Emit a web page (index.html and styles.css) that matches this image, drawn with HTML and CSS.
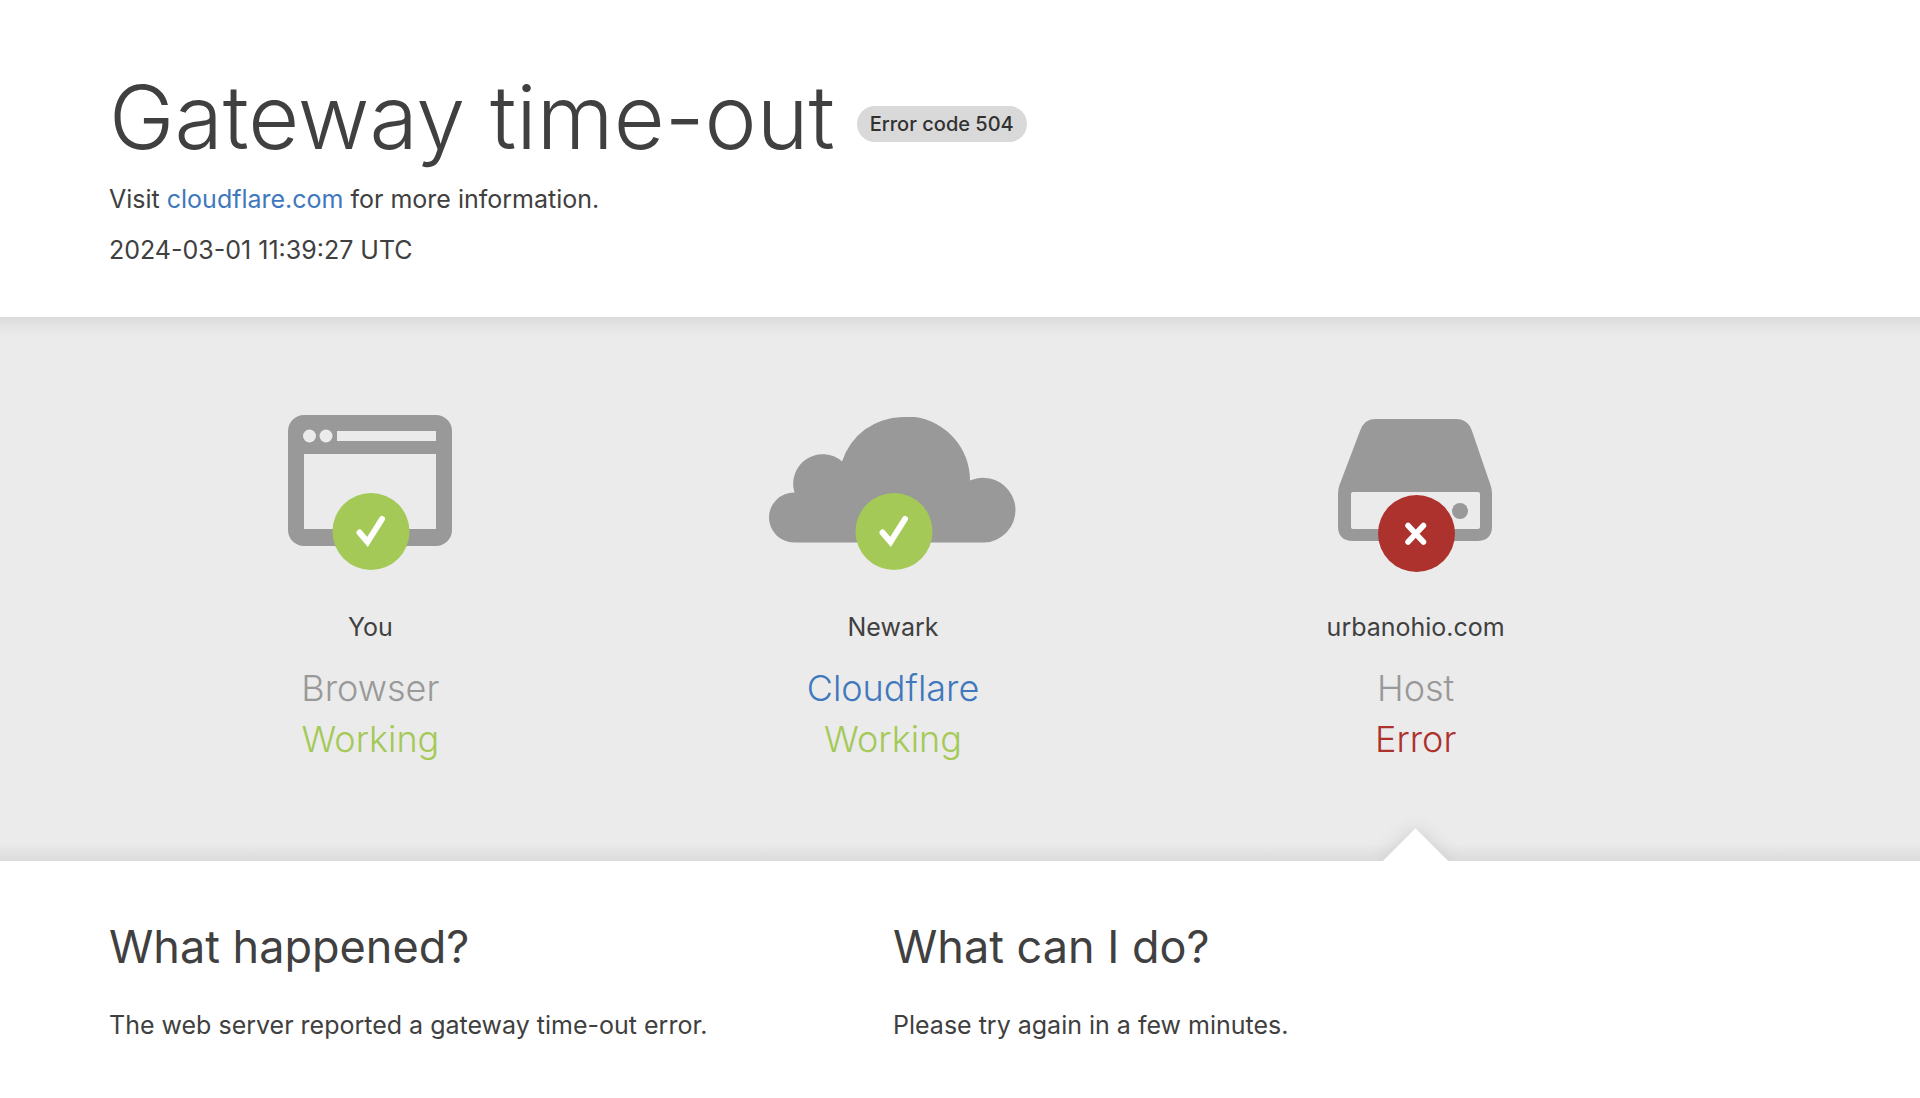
FILE: index.html
```html
<!DOCTYPE html>
<html lang="en">
<head>
    <meta charset="UTF-8">
    <meta name="viewport" content="width=device-width, initial-scale=1.0">
    <title>urbanohio.com | 504: Gateway time-out</title>
    <link rel="stylesheet" href="styles.css">
</head>
<body>
    <header class="wrapper header">
        <div class="title-row">
            <h1>Gateway time-out</h1>
            <span class="code-label">Error code 504</span>
        </div>
        <p>Visit <a href="https://www.cloudflare.com/">cloudflare.com</a> for more information.</p>
        <p>2024-03-01 11:39:27 UTC</p>
    </header>

    <main>
        <section class="status-panel">
            <div class="wrapper status-row">
                <div class="status">
                    <svg class="status-icon" viewBox="0 0 250 172" aria-hidden="true">
                        <rect x="43" y="0" width="164" height="131" rx="16" fill="#999"/>
                        <circle cx="64.5" cy="21" r="6.5" fill="#ebebeb"/>
                        <circle cx="81" cy="21" r="6.5" fill="#ebebeb"/>
                        <rect x="92" y="16" width="99" height="10" fill="#ebebeb"/>
                        <rect x="59" y="39" width="132" height="75" fill="#ebebeb"/>
                        <circle cx="126" cy="116.5" r="38.5" fill="#a4c956"/>
                        <path d="M114.5 117.500l8 9.500 14.500-23" fill="none" stroke="#fff" stroke-width="6" stroke-linecap="round"/>
                    </svg>
                    <span class="status-name">You</span>
                    <h3>Browser</h3>
                    <span class="status-text ok">Working</span>
                </div>
                <div class="status">
                    <svg class="status-icon" viewBox="0 0 250 172" aria-hidden="true">
                        <path d="M26 127.5A25 25 0 0 1 1 102.500A25 25 0 0 1 26.500 77.500A29.500 29.500 0 0 1 74 46.500A64 64 0 0 1 134 2H147A64 64 0 0 1 202 65.500A32.500 32.500 0 0 1 247.500 95A32.500 32.500 0 0 1 217 127.500Z" fill="#999"/>
                        <circle cx="126" cy="116.5" r="38.5" fill="#a4c956"/>
                        <path d="M114.5 117.500l8 9.500 14.500-23" fill="none" stroke="#fff" stroke-width="6" stroke-linecap="round"/>
                    </svg>
                    <span class="status-name">Newark</span>
                    <h3><a href="https://www.cloudflare.com/">Cloudflare</a></h3>
                    <span class="status-text ok">Working</span>
                </div>
                <div class="status">
                    <svg class="status-icon" viewBox="0 0 250 172" aria-hidden="true">
                        <path d="M84 4H165Q177 4 181 16L199.500 70Q201 74 201 79V111Q201 126 186 126H62Q47 126 47 111V79Q47 74 48.500 70L69 16Q73 4 84 4Z" fill="#999"/>
                        <rect x="60" y="77" width="129" height="37" rx="2" fill="#ebebeb"/>
                        <circle cx="169" cy="96" r="8" fill="#999"/>
                        <circle cx="125.5" cy="118.5" r="38.5" fill="#ad322d"/>
                        <path d="M117 110.500l15.500 16.500M132.500 110.500l-15.500 16.500" fill="none" stroke="#fff" stroke-width="5.5" stroke-linecap="round"/>
                    </svg>
                    <span class="status-name">urbanohio.com</span>
                    <h3>Host</h3>
                    <span class="status-text failed">Error</span>
                    <span class="arrow"></span>
                </div>
            </div>
        </section>

        <section class="wrapper details">
            <div>
                <h2>What happened?</h2>
                <p>The web server reported a gateway time-out error.</p>
            </div>
            <div>
                <h2>What can I do?</h2>
                <p>Please try again in a few minutes.</p>
            </div>
        </section>
    </main>
</body>
</html>
```
FILE: styles.css
```css
* {
    box-sizing: border-box;
}

body {
    margin: 0;
    background: #fff;
    color: #404040;
    font-family: Inter, "Liberation Sans", sans-serif;
    font-size: 25px;
    line-height: 39px;
}

h1, h2, h3, p {
    margin: 0;
}

a {
    color: #3f78bd;
    text-decoration: none;
}

.wrapper {
    max-width: 1677px;
    padding-left: 109px;
}

.header {
    padding-top: 66px;
    padding-bottom: 47px;
}

.header p {
    margin-top: 12px;
}

.title-row {
    display: flex;
    flex-wrap: wrap;
    align-items: center;
    gap: 22px;
}

h1 {
    font-size: 88px;
    font-weight: 350;
    line-height: 102px;
}

.code-label {
    margin-top: 14px;
    padding: 0 13px;
    border-radius: 18px;
    background: #d9d9d9;
    color: #313131;
    font-size: 20px;
    font-weight: 500;
    line-height: 36px;
}

.status-panel {
    overflow: hidden;
    background: linear-gradient(#dcdcdc, #ebebeb 18px, #ebebeb calc(100% - 18px), #dcdcdc);
}

.status-row {
    display: grid;
    grid-template-columns: repeat(3, 1fr);
}

.status {
    position: relative;
    display: flex;
    flex-direction: column;
    align-items: center;
    padding: 98px 0 96px;
}

.status-icon {
    width: 250px;
    max-width: 100%;
    height: 172px;
    margin-bottom: 21px;
}

h3, .status-text {
    font-size: 36px;
    font-weight: 350;
    line-height: 51px;
}

h3 {
    margin-top: 16px;
    color: #999;
}

.ok {
    color: #a4c956;
}

.failed {
    color: #ad322d;
}

/* pointer from the failing host down to the details */
.arrow {
    position: absolute;
    bottom: -24px;
    width: 47px;
    height: 47px;
    background: #fff;
    box-shadow: 0 0 18px #ccc;
    transform: rotate(45deg);
}

.details {
    display: grid;
    grid-template-columns: repeat(2, 1fr);
    padding-top: 56px;
    padding-bottom: 48px;
}

h2 {
    margin-bottom: 29px;
    font-size: 45px;
    font-weight: 400;
    line-height: 60px;
}
```
